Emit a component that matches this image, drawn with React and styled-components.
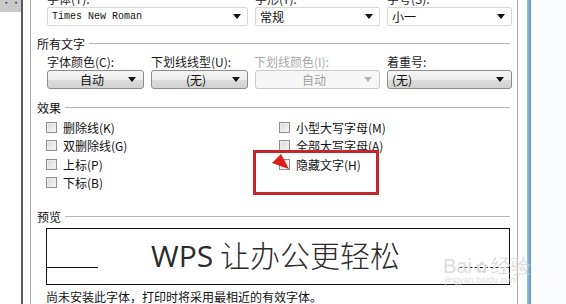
import React from "react";
import styled, { createGlobalStyle } from "styled-components";

const GlobalStyle = createGlobalStyle`
    html, body {
        margin: 0;
        padding: 0;
        background: #ffffff;
    }
`;

const UI_FONT = `"Noto Sans CJK SC", "Liberation Sans", sans-serif`;

const App = () => {
    return (
        <>
            <GlobalStyle />
            <Screen>
                <LeftStrip>
                    <GrayCorner>• •</GrayCorner>
                </LeftStrip>
                <DialogEdge />
                <Dialog>
                    <Fields>
                        <TopLabel $span={2}>字体(T):</TopLabel>
                        <TopLabel>字形(Y):</TopLabel>
                        <TopLabel>字号(S):</TopLabel>

                        <Combo $span={2}>
                            <ComboText $mono>Times New Roman</ComboText>
                            <Arrow />
                        </Combo>
                        <Combo>
                            <ComboText>常规</ComboText>
                            <Arrow />
                        </Combo>
                        <Combo>
                            <ComboText>小一</ComboText>
                            <Arrow />
                        </Combo>
                    </Fields>

                    <GroupTitle>
                        <span>所有文字</span>
                    </GroupTitle>

                    <Fields $gapTop={6}>
                        <SubLabel>字体颜色(C):</SubLabel>
                        <SubLabel>下划线线型(U):</SubLabel>
                        <SubLabel $disabled>下划线颜色(I):</SubLabel>
                        <SubLabel>着重号:</SubLabel>

                        <DropButton>
                            <span>自动</span>
                            <Arrow />
                        </DropButton>
                        <DropButton>
                            <span>(无)</span>
                            <Arrow />
                        </DropButton>
                        <DropButton $disabled>
                            <span>自动</span>
                            <Arrow $disabled />
                        </DropButton>
                        <DropButton $left>
                            <span>(无)</span>
                            <Arrow />
                        </DropButton>
                    </Fields>

                    <GroupTitle $gapTop={11}>
                        <span>效果</span>
                    </GroupTitle>

                    <Effects>
                        <EffectColumn>
                            <Check label="删除线(K)" />
                            <Check label="双删除线(G)" />
                            <Check label="上标(P)" />
                            <Check label="下标(B)" />
                        </EffectColumn>
                        <EffectColumn>
                            <Check label="小型大写字母(M)" />
                            <Check label="全部大写字母(A)" />
                            <HighlightRow>
                                <Check label="隐藏文字(H)" />
                                <Marker />
                                <Pointer viewBox="0 0 20 18">
                                    <polygon points="1,9 10,0 18,15" fill="#e01b1b" />
                                </Pointer>
                            </HighlightRow>
                        </EffectColumn>
                    </Effects>

                    <GroupTitle $gapTop={17}>
                        <span>预览</span>
                    </GroupTitle>

                    <Preview>
                        <UnderlineStub />
                        <PreviewText>
                            <Latin>WPS</Latin> 让办公更轻松
                        </PreviewText>
                        <UnderlineStub $dashed />
                        <Watermark>
                            <span>Bai</span>
                            <Paw>✿</Paw>
                            <span>经验</span>
                            <small>jingyan.baidu.com</small>
                        </Watermark>
                    </Preview>

                    <Note>尚未安装此字体，打印时将采用最相近的有效字体。</Note>
                </Dialog>
                <RightGap />
                <BlueEdge />
                <Backdrop />
            </Screen>
        </>
    );
};

const Check = ({ label }) => (
    <CheckRow>
        <Box />
        <span>{label}</span>
    </CheckRow>
);

export default App;

const Screen = styled.div`
    width: 566px;
    height: 304px;
    overflow: hidden;
    display: flex;
    background: #ffffff;
    font-family: ${UI_FONT};
    font-size: 12px;
    color: #111;
`;

const LeftStrip = styled.div`
    width: 21px;
    flex-shrink: 0;
    background: #ffffff;
`;

const GrayCorner = styled.div`
    height: 12px;
    background: #c9c9c9;
    color: #222;
    font-size: 8px;
    line-height: 6px;
    white-space: nowrap;
    overflow: hidden;
    text-align: right;
    padding-right: 1px;
`;

const DialogEdge = styled.div`
    width: 10px;
    flex-shrink: 0;
    border-left: 2px solid #5a5a5a;
    border-right: 1px solid #a8a8a8;
    background: #ffffff;
    box-sizing: border-box;
`;

const Dialog = styled.div`
    width: 487px;
    flex-shrink: 0;
    box-sizing: border-box;
    padding: 0 7px 0 6px;
    display: flex;
    flex-direction: column;
    border-right: 1px solid #a8a8a8;
    position: relative;
`;

const RightGap = styled.div`
    width: 9px;
    flex-shrink: 0;
    background: #fbfdfe;
`;

const BlueEdge = styled.div`
    width: 4px;
    flex-shrink: 0;
    background: linear-gradient(to right, #9ec3dc, #5d95bf);
`;

const Backdrop = styled.div`
    flex: 1;
    background: #fafcfd;
`;

const Fields = styled.div`
    display: grid;
    grid-template-columns: 97px 97px 125px 125px;
    column-gap: 7px;
    margin-left: 10px;
    margin-top: ${(p) => (p.$gapTop !== undefined ? p.$gapTop : -7)}px;
`;

const TopLabel = styled.div`
    grid-column: span ${(p) => p.$span || 1};
    height: 12px;
    line-height: 12px;
    color: #222;
    margin-bottom: 2px;
`;

const SubLabel = styled.div`
    height: 12px;
    line-height: 12px;
    color: ${(p) => (p.$disabled ? "#a8a8a8" : "#1a1a1a")};
    margin-bottom: 2px;
    white-space: nowrap;
    margin-left: ${(p) => (p.$disabled ? "-1px" : "0")};
`;

const Combo = styled.div`
    grid-column: span ${(p) => p.$span || 1};
    height: 19px;
    box-sizing: border-box;
    border: 1px solid #d7d7d7;
    border-radius: 2px;
    display: flex;
    align-items: center;
    padding: 0 6px 0 4px;
    background: #ffffff;
`;

const ComboText = styled.span`
    flex: 1;
    font-family: ${(p) => (p.$mono ? `"Liberation Mono", monospace` : UI_FONT)};
    font-size: ${(p) => (p.$mono ? "10px" : "12px")};
    color: #111;
`;

const Arrow = styled.span`
    width: 0;
    height: 0;
    border-left: 4px solid transparent;
    border-right: 4px solid transparent;
    border-top: 5px solid ${(p) => (p.$disabled ? "#b4b4b4" : "#111")};
`;

const DropButton = styled.div`
    height: 19px;
    box-sizing: border-box;
    border: 1px solid ${(p) => (p.$disabled ? "#c9c9c9" : "#8c8c8c")};
    border-radius: 3px;
    background: ${(p) =>
        p.$disabled
            ? "#f6f6f6"
            : "linear-gradient(to bottom, #f4f4f4 0%, #ececec 50%, #dcdcdc 51%, #d2d2d2 100%)"};
    display: flex;
    align-items: center;
    padding: 0 7px 0 ${(p) => (p.$left ? "4px" : "0")};
    color: ${(p) => (p.$disabled ? "#a0a0a0" : "#111")};

    & > span:first-child {
        flex: 1;
        text-align: ${(p) => (p.$left ? "left" : "center")};
        padding-left: ${(p) => (p.$left ? "0" : "8px")};
    }
`;

const GroupTitle = styled.div`
    margin-top: ${(p) => (p.$gapTop !== undefined ? p.$gapTop : 10)}px;
    height: 14px;
    display: flex;
    align-items: center;
    gap: 4px;
    color: #111;

    &::after {
        content: "";
        flex: 1;
        height: 1px;
        background: #b4b4b4;
    }
`;

const Effects = styled.div`
    display: grid;
    grid-template-columns: 233px 1fr;
    margin: 4px 0 0 9px;
`;

const EffectColumn = styled.div`
    display: flex;
    flex-direction: column;
`;

const CheckRow = styled.div`
    height: 18.5px;
    display: flex;
    align-items: center;
    gap: 6px;
    color: #111;
    white-space: nowrap;
`;

const Box = styled.span`
    width: 11px;
    height: 11px;
    box-sizing: border-box;
    border: 1px solid #8e8e8e;
    background: linear-gradient(135deg, #d8d8d8, #f7f7f7);
    box-shadow: inset 0 0 0 1px #eeeeee;
`;

const HighlightRow = styled.div`
    position: relative;
`;

const Marker = styled.div`
    position: absolute;
    left: -26px;
    top: -5px;
    width: 126px;
    height: 45px;
    box-sizing: border-box;
    border: 3px solid #c4262b;
`;

const Pointer = styled.svg`
    position: absolute;
    left: -8px;
    top: -1px;
    width: 20px;
    height: 18px;
`;

const Preview = styled.div`
    margin: 5px 0 0 9px;
    height: 58px;
    box-sizing: border-box;
    border: 1px solid #111;
    display: grid;
    grid-template-columns: 51px 1fr 50px;
    align-items: end;
    position: relative;
`;

const UnderlineStub = styled.div`
    height: 0;
    border-top: 1px ${(p) => (p.$dashed ? "dashed" : "solid")} #111;
    margin-bottom: 16px;
`;

const PreviewText = styled.div`
    align-self: center;
    text-align: center;
    font-size: 30px;
    line-height: 34px;
    color: #2a2a2a;
    font-family: "Noto Sans CJK SC", sans-serif;
    font-weight: 300;
    margin-top: -4px;
    padding-right: 6px;
`;

const Latin = styled.span`
    font-family: "Open Sans", "Liberation Sans", sans-serif;
    font-weight: 400;
`;

const Watermark = styled.div`
    position: absolute;
    right: -22px;
    top: 24px;
    display: flex;
    align-items: baseline;
    gap: 1px;
    font-family: "Liberation Sans", sans-serif;
    font-size: 20px;
    color: rgba(210, 210, 210, 0.75);
    pointer-events: none;

    & > small {
        position: absolute;
        left: 2px;
        top: 22px;
        font-size: 9px;
        white-space: nowrap;
    }
`;

const Paw = styled.span`
    font-size: 16px;
    margin: 0 2px;
`;

const Note = styled.div`
    margin: 5px 0 0 9px;
    height: 14px;
    line-height: 14px;
    color: #111;
    white-space: nowrap;
`;
